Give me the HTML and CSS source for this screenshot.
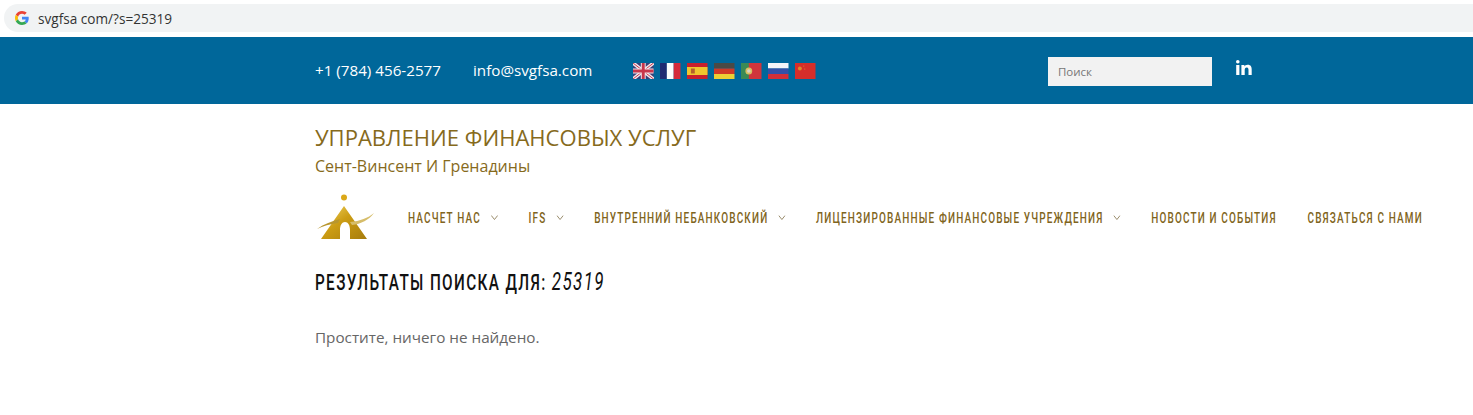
FILE: index.html
```html
<!DOCTYPE html>
<html>

<head>
    <meta charset="utf-8">
    <title>svgfsa</title>
    <link rel="stylesheet" href="styles.css">
</head>

<body>
    <div class="addressbar">
        <div class="address">
            <svg class="g-icon" width="14" height="14" viewBox="0 0 48 48">
                <path fill="#ea4335" d="M24 9.5c3.5 0 6.700 1.200 9.200 3.600l6.900-6.900C35.900 2.400 30.500 0 24 0 14.600 0 6.500 5.400 2.600 13.200l8 6.200C12.500 13.700 17.800 9.500 24 9.500z"/>
                <path fill="#4285f4" d="M47 24.500c0-1.600-.1-3.100-.4-4.500H24v9h12.900c-.6 3-2.200 5.500-4.700 7.200l7.700 6C44.400 38 47 31.800 47 24.500z"/>
                <path fill="#fbbc05" d="M10.600 28.600c-.5-1.400-.8-3-.8-4.600s.3-3.200.8-4.600l-8-6.200C.9 16.500 0 20.100 0 24s.9 7.500 2.600 10.800l8-6.200z"/>
                <path fill="#34a853" d="M24 48c6.500 0 11.900-2.100 15.900-5.800l-7.700-6c-2.200 1.500-4.900 2.300-8.200 2.300-6.200 0-11.500-4.200-13.400-9.900l-8 6.200C6.500 42.600 14.600 48 24 48z"/>
            </svg>
            <span class="url">svgfsa com/?s=25319</span>
        </div>
    </div>

    <div class="topbar">
        <div class="wrap topbar-inner">
            <span class="contact phone">+1 (784) 456-2577</span>
            <span class="contact email">info@svgfsa.com</span>
            <div class="flags">
                <svg class="flag" viewBox="0 0 21 16" preserveAspectRatio="none">
                    <rect width="21" height="16" fill="#3c3f78"/>
                    <path d="M0 0L21 16M21 0L0 16" stroke="#f2e6ea" stroke-width="3.600"/>
                    <path d="M0 0L21 16M21 0L0 16" stroke="#c8354a" stroke-width="1"/>
                    <path d="M10.500 0V16M0 8H21" stroke="#f2e6ea" stroke-width="5"/>
                    <path d="M10.500 0V16M0 8H21" stroke="#c8354a" stroke-width="3"/>
                </svg>
                <svg class="flag" viewBox="0 0 21 16" preserveAspectRatio="none">
                    <rect width="7" height="16" fill="#1f2a72"/>
                    <rect x="7" width="7" height="16" fill="#fbfbfb"/>
                    <rect x="14" width="7" height="16" fill="#d42a3a"/>
                </svg>
                <svg class="flag" viewBox="0 0 21 16" preserveAspectRatio="none">
                    <rect width="21" height="16" fill="#c8202c"/>
                    <rect y="4" width="21" height="8" fill="#f0c52e"/>
                    <rect x="4" y="5.500" width="4" height="5" fill="#b5602a"/>
                </svg>
                <svg class="flag" viewBox="0 0 21 16" preserveAspectRatio="none">
                    <rect width="21" height="5.500" fill="#4a4a46"/>
                    <rect y="5.500" width="21" height="5.500" fill="#d03a26"/>
                    <rect y="11" width="21" height="5" fill="#eccf35"/>
                </svg>
                <svg class="flag" viewBox="0 0 21 16" preserveAspectRatio="none">
                    <rect width="21" height="16" fill="#d0353c"/>
                    <rect width="8" height="16" fill="#3a8a55"/>
                    <circle cx="8" cy="8" r="3.500" fill="#d8c060"/>
                    <circle cx="8" cy="8" r="1.800" fill="#d9d4cc"/>
                </svg>
                <svg class="flag" viewBox="0 0 21 16" preserveAspectRatio="none">
                    <rect width="21" height="5.500" fill="#f4f4f8"/>
                    <rect y="5.500" width="21" height="5.500" fill="#3350a8"/>
                    <rect y="11" width="21" height="5" fill="#d22f38"/>
                </svg>
                <svg class="flag" viewBox="0 0 21 16" preserveAspectRatio="none">
                    <rect width="21" height="16" fill="#d62e2a"/>
                    <circle cx="5" cy="5.500" r="2" fill="#dc8a2a"/>
                    <circle cx="9" cy="3" r=".6" fill="#dc8a2a"/>
                    <circle cx="10" cy="6" r=".6" fill="#dc8a2a"/>
                </svg>
            </div>
            <input class="search" type="text" placeholder="Поиск">
            <svg class="linkedin" width="16" height="15" viewBox="0 0 16 15">
                <path fill="#fff" d="M.2 5H3.400V15H.2zM1.800 0a1.800 1.800 0 1 1 0 3.600 1.800 1.800 0 0 1 0-3.600zM5.400 5H8.400V6.400C8.900 5.500 10 4.700 11.600 4.700 15 4.700 15.700 6.900 15.700 9.800V15H12.500V10.400C12.500 9.200 12.400 7.600 10.800 7.600 9.200 7.600 8.700 8.900 8.700 10.300V15H5.400z"/>
            </svg>
        </div>
    </div>

    <div class="wrap">
        <div class="site-title">УПРАВЛЕНИЕ ФИНАНСОВЫХ УСЛУГ</div>
        <div class="site-sub">Сент-Винсент И Гренадины</div>

        <div class="navrow">
            <svg class="logo" width="58" height="48" viewBox="0 0 58 48">
                <defs>
                    <linearGradient id="gold" x1="0" y1="0" x2="1" y2="1">
                        <stop offset="0" stop-color="#f3d768"/>
                        <stop offset=".45" stop-color="#cc9d14"/>
                        <stop offset="1" stop-color="#a67c0c"/>
                    </linearGradient>
                </defs>
                <circle cx="27" cy="3.500" r="3" fill="#dba818"/>
                <path fill="url(#gold)" d="M27 12L50 45H33V36C33 31 31 28 28 28 25 28 23 31 23 36V45H4z"/>
                <path fill="#b8962e" d="M0 35C7 30 15 27 23 25L21 29C13 30 6 32 0 35z"/>
                <path fill="#d6bd6a" d="M57 19C51 24 43 27 33 28L35 31C44 30 52 26 57 19z"/>
            </svg>
            <ul class="menu">
                <li>НАСЧЕТ НАС<svg class="caret" width="11" height="5" viewBox="0 0 10 5" preserveAspectRatio="none"><path d="M.5 .5L5 4.500 9.500 .5" fill="none" stroke="#8a7a55"/></svg></li>
                <li>IFS<svg class="caret" width="11" height="5" viewBox="0 0 10 5" preserveAspectRatio="none"><path d="M.5 .5L5 4.500 9.500 .5" fill="none" stroke="#8a7a55"/></svg></li>
                <li>ВНУТРЕННИЙ НЕБАНКОВСКИЙ<svg class="caret" width="11" height="5" viewBox="0 0 10 5" preserveAspectRatio="none"><path d="M.5 .5L5 4.500 9.500 .5" fill="none" stroke="#8a7a55"/></svg></li>
                <li>ЛИЦЕНЗИРОВАННЫЕ ФИНАНСОВЫЕ УЧРЕЖДЕНИЯ<svg class="caret" width="11" height="5" viewBox="0 0 10 5" preserveAspectRatio="none"><path d="M.5 .5L5 4.500 9.500 .5" fill="none" stroke="#8a7a55"/></svg></li>
                <li>НОВОСТИ И СОБЫТИЯ</li>
                <li>СВЯЗАТЬСЯ С НАМИ</li>
            </ul>
        </div>

        <h1 class="results">РЕЗУЛЬТАТЫ ПОИСКА ДЛЯ: <em>25319</em></h1>
        <p class="empty">Простите, ничего не найдено.</p>
    </div>
</body>

</html>
```

FILE: styles.css
```css
body {
    margin: 0;
    background-color: #fff;
    font-family: "Open Sans", sans-serif;
    overflow: hidden;
}

.addressbar {
    height: 37px;
    padding: 4px 0 0 4px;
    box-sizing: border-box;
    background-color: #fff;
}

.address {
    height: 28px;
    background-color: #f1f3f4;
    border-radius: 14px 0 0 14px;
    display: flex;
    align-items: center;
    padding-left: 11px;
}

.url {
    margin-left: 9px;
    font: 13.600px "Open Sans", sans-serif;
    color: #333;
}

.wrap {
    width: 1130px;
    margin-left: 315px;
}

.topbar {
    height: 67px;
    background-color: #00679a;
}

.topbar-inner {
    height: 100%;
    display: flex;
    align-items: center;
}

.contact {
    margin-bottom: 2px;
    color: #fff;
    font-size: 15.200px;
}

.phone {
    width: 158px;
}

.email {
    width: 160px;
}

.flags {
    display: flex;
    gap: 6.500px;
    width: 415px;
}

.flag {
    width: 20.500px;
    height: 16px;
}

.search {
    width: 164px;
    height: 29px;
    margin-top: 1px;
    box-sizing: border-box;
    border: 0;
    padding: 0 10px;
    background-color: #f2f2f2;
    font: 11.500px "Open Sans", sans-serif;
}

.search::placeholder {
    color: #777;
}

.linkedin {
    margin: -7px 0 0 24px;
}

.site-title {
    margin-top: 18px;
    font-size: 22.050px;
    line-height: 30px;
    color: #866a1c;
}

.site-sub {
    margin-top: 2px;
    font-size: 16px;
    line-height: 24px;
    color: #866a1c;
}

.navrow {
    display: flex;
    align-items: center;
    margin-top: 13px;
    height: 54px;
}

.logo {
    flex: none;
    margin-left: 2px;
}

/* no Oswald here, so Roboto squeezed to the same width */
.menu {
    list-style: none;
    margin: 0 0 0 33px;
    padding: 0;
    display: flex;
    flex: none;
    gap: 47.700px;
    font: 500 15.500px "Roboto", sans-serif;
    letter-spacing: 1.800px;
    color: #7f6420;
    white-space: nowrap;
    transform: scaleX(.643);
    transform-origin: left center;
}

.caret {
    margin: 0 0 3px 15.500px;
}

.results {
    margin: 22px 0 0;
    font: 500 22.500px/30px "Roboto", sans-serif;
    letter-spacing: 2px;
    color: #111;
    white-space: nowrap;
    transform: scaleX(.68);
    transform-origin: left center;
}

.results em {
    font-size: 25px;
    font-weight: 400;
}

.empty {
    margin: 30px 0 0;
    font-size: 15.250px;
    color: #666;
}
```
